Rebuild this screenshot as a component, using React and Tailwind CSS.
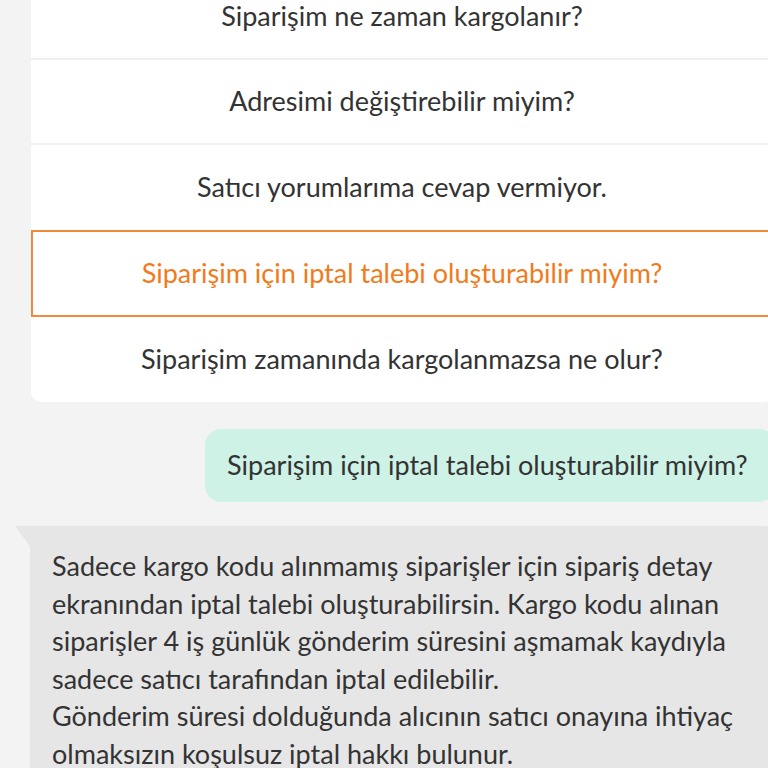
import React from "react";

const options = [
    "Siparişim ne zaman kargolanır?",
    "Adresimi değiştirebilir miyim?",
    "Satıcı yorumlarıma cevap vermiyor.",
    "Siparişim için iptal talebi oluşturabilir miyim?",
    "Siparişim zamanında kargolanmazsa ne olur?",
];

const selected = 3;

export default function App() {
    return (
        <div
            className="w-[768px] h-[768px] overflow-hidden bg-[#f3f3f3] text-[#333333]"
            style={{ fontFamily: "Lato, 'Open Sans', sans-serif" }}
        >
            {/* Quick answer list */}
            <div className="ml-[31px] -mt-[25px] w-[742px] bg-white rounded-b-[10px] overflow-hidden">
                {options.map((o, i) => (
                    <div
                        key={i}
                        className={
                            i === selected
                                ? "h-[87px] flex items-center justify-center border-2 border-[#f08a3c] text-[#f27a1a] text-[27px]"
                                : i === options.length - 1 || i === selected - 1
                                ? "h-[85px] flex items-center justify-center text-[27px]"
                                : "h-[85px] flex items-center justify-center border-b-2 border-[#efefef] text-[27px]"
                        }
                    >
                        {o}
                    </div>
                ))}
            </div>

            {/* User message */}
            <div className="mt-[27px] ml-[205px] w-[570px] h-[73px] rounded-[16px] bg-[#cef2e6] flex items-center pl-[22px] text-[27px] text-[#333333]">
                Siparişim için iptal talebi oluşturabilir miyim?
            </div>

            {/* Bot answer */}
            <div className="relative mt-[24px] ml-[30px] w-[750px] bg-[#e6e6e6] rounded-tr-[16px] pl-[22px] pr-[16px] pt-[21px] pb-[20px] text-[27px] leading-[37.5px] text-[#333333]">
                <svg className="absolute -left-[15px] top-0" width="16" height="22" viewBox="0 0 16 22">
                    <path d="M0 0 H16 V22 Z" fill="#e6e6e6" />
                </svg>
                <p>
                    Sadece kargo kodu alınmamış siparişler için sipariş detay ekranından iptal talebi oluşturabilirsin. Kargo kodu alınan siparişler 4 iş günlük gönderim süresini aşmamak kaydıyla sadece satıcı tarafından iptal edilebilir.
                </p>
                <p>
                    Gönderim süresi dolduğunda alıcının satıcı onayına ihtiyaç olmaksızın koşulsuz iptal hakkı bulunur.
                </p>
            </div>
        </div>
    );
}
